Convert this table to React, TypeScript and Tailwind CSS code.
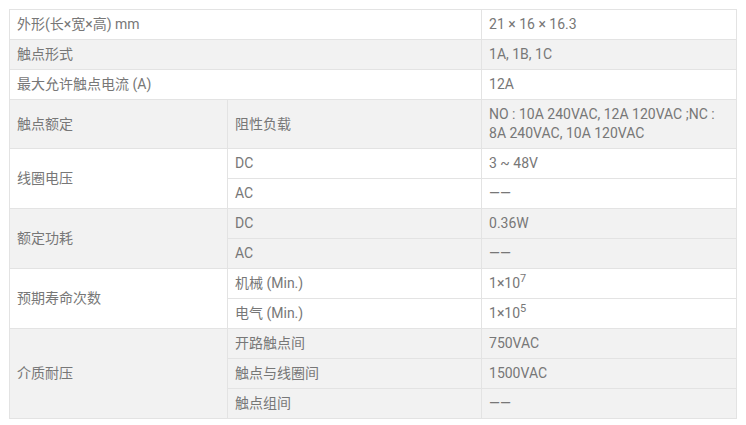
import React from "react";

const cell = "border border-[#e3e3e3] px-[7px] py-[5px] leading-[19px] align-middle";

const Sup = ({base, exp}: {base: string; exp: string}) => (
  <span>
    {base}
    <sup className="text-[11px] -top-[6px]">{exp}</sup>
  </span>
);

export default function App() {
  return (
    <div className="w-[746px] h-[425px] bg-white pt-[9px] pl-[9px]">
      <table
        className="w-[727px] border-collapse table-fixed text-[14px] text-[#777777]"
        style={{fontFamily: "Roboto, 'Noto Sans CJK SC', sans-serif"}}
      >
        <colgroup>
          <col className="w-[218px]"/>
          <col className="w-[254px]"/>
          <col className="w-[255px]"/>
        </colgroup>
        <tbody>
          <tr className="bg-white">
            <td className={cell} colSpan={2}>外形(长×宽×高) mm</td>
            <td className={cell}>21 × 16 × 16.3</td>
          </tr>
          <tr className="bg-[#f2f2f2]">
            <td className={cell} colSpan={2}>触点形式</td>
            <td className={cell}>1A, 1B, 1C</td>
          </tr>
          <tr className="bg-white">
            <td className={cell} colSpan={2}>最大允许触点电流 (A)</td>
            <td className={cell}>12A</td>
          </tr>
          <tr className="bg-[#f2f2f2]">
            <td className={cell}>触点额定</td>
            <td className={cell}>阻性负载</td>
            <td className={cell}>NO : 10A 240VAC, 12A 120VAC ;NC : 8A 240VAC, 10A 120VAC</td>
          </tr>
          <tr className="bg-white">
            <td className={cell} rowSpan={2}>线圈电压</td>
            <td className={cell}>DC</td>
            <td className={cell}>3 ~ 48V</td>
          </tr>
          <tr className="bg-white">
            <td className={cell}>AC</td>
            <td className={cell}>——</td>
          </tr>
          <tr className="bg-[#f2f2f2]">
            <td className={cell} rowSpan={2}>额定功耗</td>
            <td className={cell}>DC</td>
            <td className={cell}>0.36W</td>
          </tr>
          <tr className="bg-[#f2f2f2]">
            <td className={cell}>AC</td>
            <td className={cell}>——</td>
          </tr>
          <tr className="bg-white">
            <td className={cell} rowSpan={2}>预期寿命次数</td>
            <td className={cell}>机械 (Min.)</td>
            <td className={cell}><Sup base="1×10" exp="7"/></td>
          </tr>
          <tr className="bg-white">
            <td className={cell}>电气 (Min.)</td>
            <td className={cell}><Sup base="1×10" exp="5"/></td>
          </tr>
          <tr className="bg-[#f2f2f2]">
            <td className={cell} rowSpan={3}>介质耐压</td>
            <td className={cell}>开路触点间</td>
            <td className={cell}>750VAC</td>
          </tr>
          <tr className="bg-[#f2f2f2]">
            <td className={cell}>触点与线圈间</td>
            <td className={cell}>1500VAC</td>
          </tr>
          <tr className="bg-[#f2f2f2]">
            <td className={cell}>触点组间</td>
            <td className={cell}>——</td>
          </tr>
        </tbody>
      </table>
    </div>
  );
}
